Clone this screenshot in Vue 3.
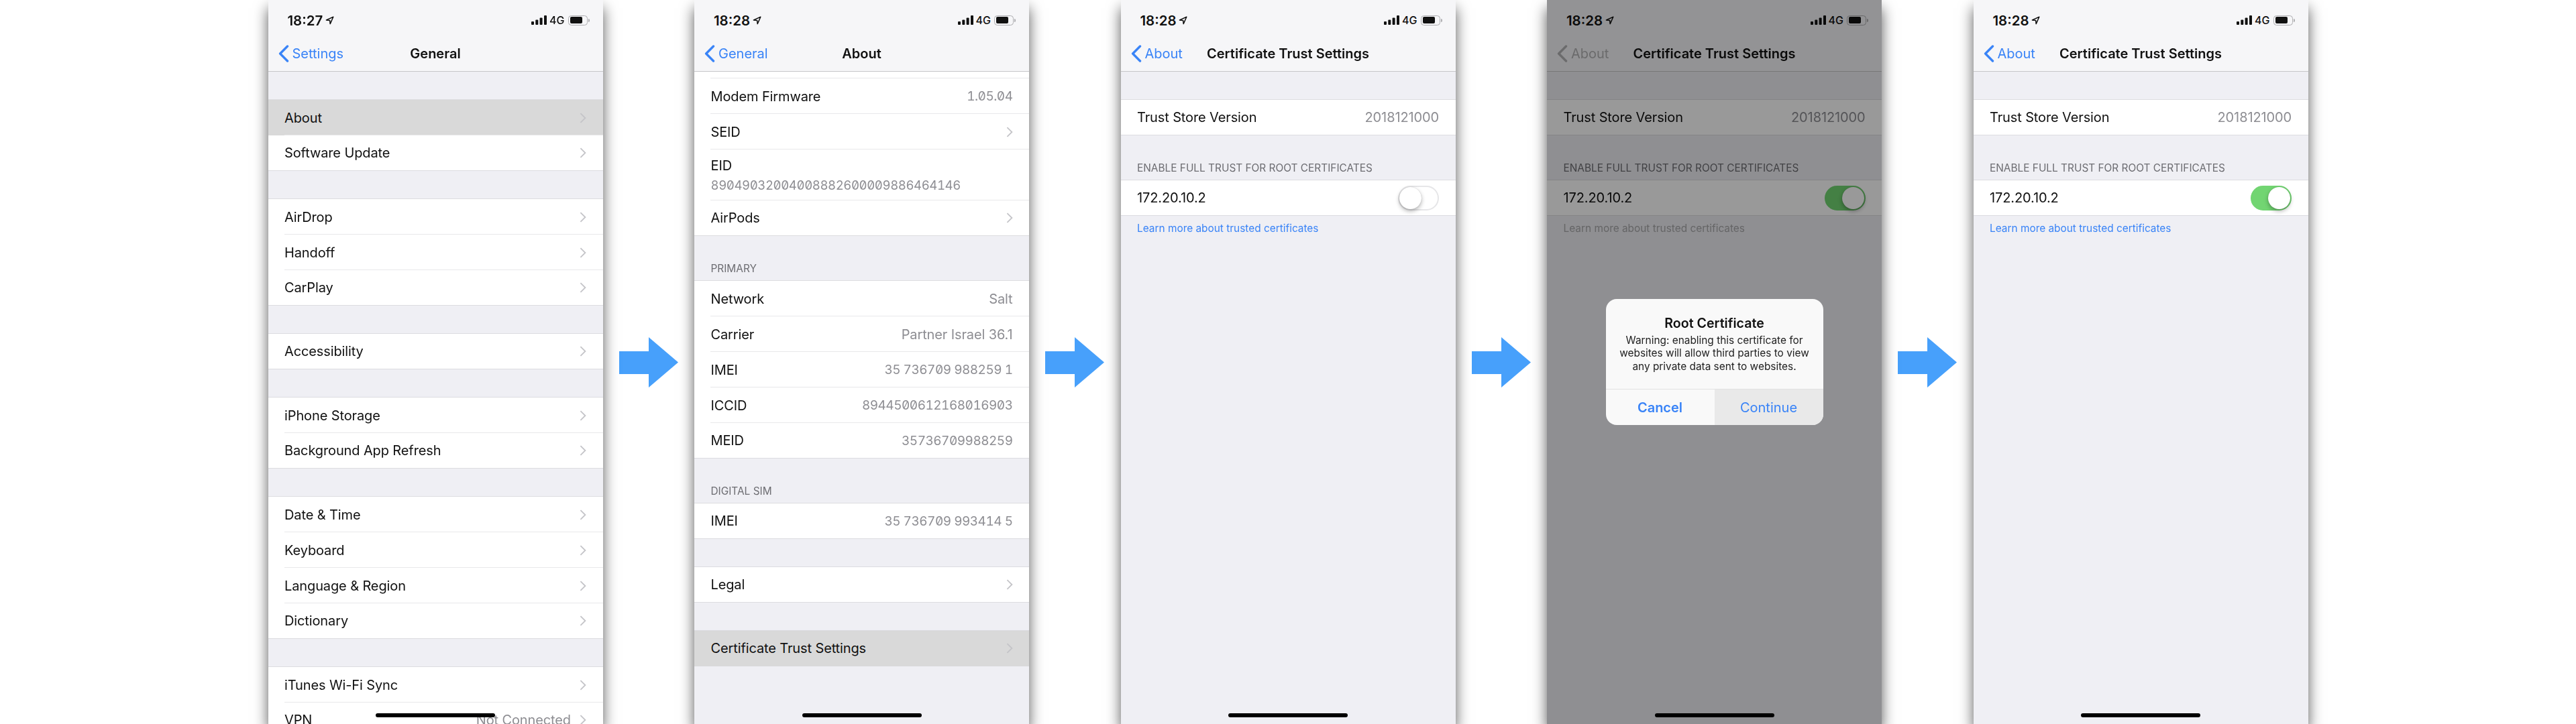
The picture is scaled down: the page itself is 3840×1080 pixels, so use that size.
<script setup>
const chevRow = (text, value) => ({ text, value, chev: true });

const trustGroups = (on) => [
  { rows: [{ text: 'Trust Store Version', value: '2018121000' }] },
  {
    label: 'ENABLE FULL TRUST FOR ROOT CERTIFICATES',
    rows: [{ text: '172.20.10.2', toggle: on ? 'on' : 'off' }],
  },
];

const phones = [
  {
    time: '18:27',
    back: 'Settings',
    title: 'General',
    groups: [
      { rows: [{ text: 'About', chev: true, selected: true }, chevRow('Software Update')] },
      { rows: [chevRow('AirDrop'), chevRow('Handoff'), chevRow('CarPlay')] },
      { rows: [chevRow('Accessibility')] },
      { rows: [chevRow('iPhone Storage'), chevRow('Background App Refresh')] },
      { rows: [chevRow('Date & Time'), chevRow('Keyboard'), chevRow('Language & Region'), chevRow('Dictionary')] },
      { rows: [chevRow('iTunes Wi-Fi Sync'), chevRow('VPN', 'Not Connected')] },
    ],
  },
  {
    time: '18:28',
    back: 'General',
    title: 'About',
    groups: [
      {
        flush: true,
        rows: [
          { stub: true },
          { text: 'Modem Firmware', value: '1.05.04', digits: true },
          chevRow('SEID'),
          { text: 'EID', sub: '89049032004008882600009886464146' },
          chevRow('AirPods'),
        ],
      },
      {
        label: 'PRIMARY',
        rows: [
          { text: 'Network', value: 'Salt' },
          { text: 'Carrier', value: 'Partner Israel 36.1' },
          { text: 'IMEI', value: '35 736709 988259 1', digits: true },
          { text: 'ICCID', value: '8944500612168016903', digits: true },
          { text: 'MEID', value: '35736709988259', digits: true },
        ],
      },
      {
        label: 'DIGITAL SIM',
        rows: [{ text: 'IMEI', value: '35 736709 993414 5', digits: true }],
      },
      { rows: [chevRow('Legal')] },
      { rows: [{ text: 'Certificate Trust Settings', chev: true, selected: true }] },
    ],
  },
  {
    time: '18:28',
    back: 'About',
    title: 'Certificate Trust Settings',
    groups: trustGroups(false),
    footer: 'Learn more about trusted certificates',
  },
  {
    time: '18:28',
    back: 'About',
    title: 'Certificate Trust Settings',
    groups: trustGroups(true),
    footer: 'Learn more about trusted certificates',
    dialog: true,
  },
  {
    time: '18:28',
    back: 'About',
    title: 'Certificate Trust Settings',
    groups: trustGroups(true),
    footer: 'Learn more about trusted certificates',
  },
];
</script>

<template>
  <div class="strip">
    <template v-for="(phone, i) in phones" :key="i">
      <div class="phone" :class="{ dim: phone.dialog }">
        <div class="head">
          <div class="status">
            <div class="clock">
              <span class="time">{{ phone.time }}</span>
              <svg class="locate" width="13" height="13" viewBox="0 0 13 13">
                <path d="M11.8 1.2 1.4 5.9l5.2.5.6 5.2z" fill="none" stroke="#111" stroke-width="1.5" stroke-linejoin="round" />
              </svg>
            </div>
            <div class="signal">
              <svg width="23" height="14" viewBox="0 0 23 14">
                <rect x="0" y="9" width="4" height="5" rx="1" fill="#111" />
                <rect x="6.3" y="6.5" width="4" height="7.5" rx="1" fill="#111" />
                <rect x="12.6" y="3.5" width="4" height="10.5" rx="1" fill="#111" />
                <rect x="19" y="0" width="4" height="14" rx="1" fill="#111" />
              </svg>
              <span class="net">4G</span>
              <span class="battery"><i></i></span>
              <span class="nub"></span>
            </div>
          </div>
          <div class="nav">
            <div class="back">
              <svg width="16" height="26" viewBox="0 0 16 26">
                <path d="M13.5 2 2.6 13l10.9 11" fill="none" stroke="currentColor" stroke-width="3.4" stroke-linecap="round" stroke-linejoin="round" />
              </svg>
              <span>{{ phone.back }}</span>
            </div>
            <div class="title">{{ phone.title }}</div>
          </div>
        </div>

        <div class="body">
          <section v-for="(group, g) in phone.groups" :key="g">
            <div v-if="group.label" class="label" :class="{ short: group.label === 'DIGITAL SIM' }">{{ group.label }}</div>
            <div class="group" :class="{ spaced: !group.label && !group.flush, flush: group.flush }">
              <div
                v-for="(row, r) in group.rows"
                :key="r"
                class="row"
                :class="{ selected: row.selected, stub: row.stub, tall: row.sub }"
              >
                <template v-if="!row.stub">
                  <div class="row-main">
                    <span class="text">{{ row.text }}</span>
                    <span v-if="row.sub" class="sub">{{ row.sub }}</span>
                  </div>
                  <span v-if="row.value" class="value" :class="{ digits: row.digits }">{{ row.value }}</span>
                  <svg v-if="row.chev" class="chev" width="10" height="16" viewBox="0 0 10 16">
                    <path d="M1.4 1.2 8.4 8l-7 6.8" fill="none" stroke="#c4c4c8" stroke-width="1.8" />
                  </svg>
                  <span v-if="row.toggle" class="toggle" :class="row.toggle"><i></i></span>
                </template>
              </div>
            </div>
          </section>
          <div v-if="phone.footer" class="footer">{{ phone.footer }}</div>
        </div>

        <div v-if="phone.dialog" class="overlay">
          <div class="dialog">
            <div class="dialog-text">
              <div class="dialog-title">Root Certificate</div>
              <div class="dialog-msg">Warning: enabling this certificate for websites will allow third parties to view any private data sent to websites.</div>
            </div>
            <div class="dialog-actions">
              <div class="action cancel">Cancel</div>
              <div class="action pressed">Continue</div>
            </div>
          </div>
        </div>

        <div class="home"></div>
      </div>

      <div v-if="i < phones.length - 1" class="step">
        <svg width="88" height="75" viewBox="0 0 88 75">
          <path d="M0 21h44V0l44 37.5L44 75V55H0z" fill="#47a0fb" />
        </svg>
      </div>
    </template>
  </div>
</template>

<style scoped>
.strip {
  display: flex;
  width: 3840px;
  height: 1080px;
  padding-left: 399.5px;
  box-sizing: border-box;
  overflow: hidden;
  background: #fff;
  font-family: Inter, "Liberation Sans", sans-serif;
  color: #111;
}

.phone {
  position: relative;
  flex: none;
  width: 499px;
  height: 1080px;
  overflow: hidden;
  background: #efeff4;
  box-shadow: 0 12px 20px rgba(0, 0, 0, 0.65);
  filter: blur(0.4px);
}

.step {
  flex: none;
  width: 136.5px;
  display: flex;
  align-items: center;
  justify-content: center;
}

.head {
  background: #f6f6f8;
  border-bottom: 1px solid #c6c6c8;
}

.status {
  height: 48px;
  padding: 6px 20px 0 29px;
  display: flex;
  align-items: center;
  justify-content: space-between;
}

.clock {
  display: flex;
  align-items: center;
  gap: 4px;
}

.time {
  font-size: 20.4px;
  font-weight: 600;
}

.signal {
  display: flex;
  align-items: center;
}

.net {
  margin-left: 4px;
  font-size: 16px;
  font-weight: 500;
}

.battery {
  margin-left: 5px;
  width: 29px;
  height: 15px;
  box-sizing: border-box;
  padding: 1.5px 7px 1.5px 2px;
  border: 1.5px solid #adadb0;
  border-radius: 4.5px;
  display: flex;
}

.battery i {
  flex: 1;
  background: #111;
  border-radius: 2px;
}

.nub {
  width: 2px;
  height: 5px;
  margin-left: 1px;
  background: #adadb0;
  border-radius: 0 2px 2px 0;
}

.nav {
  height: 52px;
  display: grid;
  grid-template-columns: 1fr auto 1fr;
  align-items: center;
}

.back {
  display: flex;
  align-items: center;
  gap: 5px;
  margin-left: 15px;
  color: #3a84f7;
  font-size: 20px;
}

.title {
  font-size: 20px;
  font-weight: 600;
}

.body {
  display: flow-root;
}

.group {
  background: #fff;
  border-top: 1px solid #dcdce0;
}

.group.spaced {
  margin-top: 41px;
}

.group.flush {
  border-top: 0;
}

.label {
  height: 66px;
  box-sizing: border-box;
  padding: 0 24.5px 8.5px;
  display: flex;
  align-items: flex-end;
  font-size: 15.4px;
  line-height: 18px;
  color: #6d6d72;
}

.row {
  position: relative;
  display: flex;
  align-items: center;
  height: 53px;
  box-sizing: border-box;
  padding: 0 24.5px;
  font-size: 20px;
  letter-spacing: -0.12px;
  border-bottom: 1px solid #dcdce0;
}

.row:not(:last-child) {
  border-bottom: 0;
}

/* inset separator, last row of a group runs full width instead */
.row:not(:last-child)::after {
  content: "";
  position: absolute;
  left: 24px;
  right: 0;
  bottom: 0;
  height: 1.5px;
  background: #e8e8ea;
}

.row.stub {
  height: 10px;
}

.row.tall {
  height: 76px;
}

.row.selected {
  background: #d9d9d9;
  border-bottom-color: #d9d9d9;
}

.row-main {
  flex: 1;
  display: flex;
  flex-direction: column;
}

.sub {
  margin-top: 6px;
  font-size: 18.6px;
  line-height: 22px;
  letter-spacing: -0.42px;
  color: #8e8e93;
  font-variant-numeric: tabular-nums slashed-zero;
}

.value {
  color: #8e8e93;
}

.value.digits {
  font-size: 19px;
  letter-spacing: -0.5px;
  font-variant-numeric: tabular-nums slashed-zero;
}

.chev {
  flex: none;
  margin-left: 13px;
}

.toggle {
  flex: none;
  position: relative;
  width: 61px;
  height: 37px;
  box-sizing: border-box;
  border-radius: 19px;
  border: 2px solid #e6e6e8;
  background: #fff;
}

.toggle i {
  position: absolute;
  top: 0;
  left: 0;
  width: 33px;
  height: 33px;
  border-radius: 50%;
  background: #fff;
  box-shadow: 0 3px 6px rgba(0, 0, 0, 0.3), 0 0 1px rgba(0, 0, 0, 0.25);
}

.toggle.on {
  border-color: #72d572;
  background: #72d572;
}

.toggle.on i {
  left: 24px;
}

.footer {
  padding: 10px 24.5px 0;
  font-size: 15.4px;
  line-height: 18px;
  color: #3a84f7;
}

.dim .back {
  color: #b2b2b4;
}

.dim .footer {
  color: #a8a8aa;
}

.overlay {
  position: absolute;
  inset: 0;
  background: rgba(0, 0, 0, 0.4);
  display: flex;
  align-items: center;
  justify-content: center;
}

.dialog {
  width: 324px;
  height: 188px;
  display: flex;
  flex-direction: column;
  overflow: hidden;
  border-radius: 16px;
  background: #f9f9f9;
}

.dialog-text {
  flex: 1;
  padding: 24px 18px 0;
  text-align: center;
}

.dialog-title {
  font-size: 19.6px;
  line-height: 24px;
  font-weight: 600;
}

.dialog-msg {
  margin-top: 4px;
  font-size: 15.4px;
  line-height: 19.3px;
  color: #222;
}

.dialog-actions {
  display: flex;
  height: 53px;
  border-top: 1px solid #e2e2e2;
}

.action {
  flex: 1;
  display: flex;
  align-items: center;
  justify-content: center;
  font-size: 20px;
  color: #3a84f7;
}

.action.cancel {
  font-weight: 600;
}

.action.pressed {
  background: #e9e9e9;
}

.home {
  position: absolute;
  left: 50%;
  bottom: 10px;
  width: 178px;
  height: 6px;
  margin-left: -89px;
  border-radius: 3px;
  background: #000;
}
</style>

<style>
body {
  background: #fff;
}
</style>
